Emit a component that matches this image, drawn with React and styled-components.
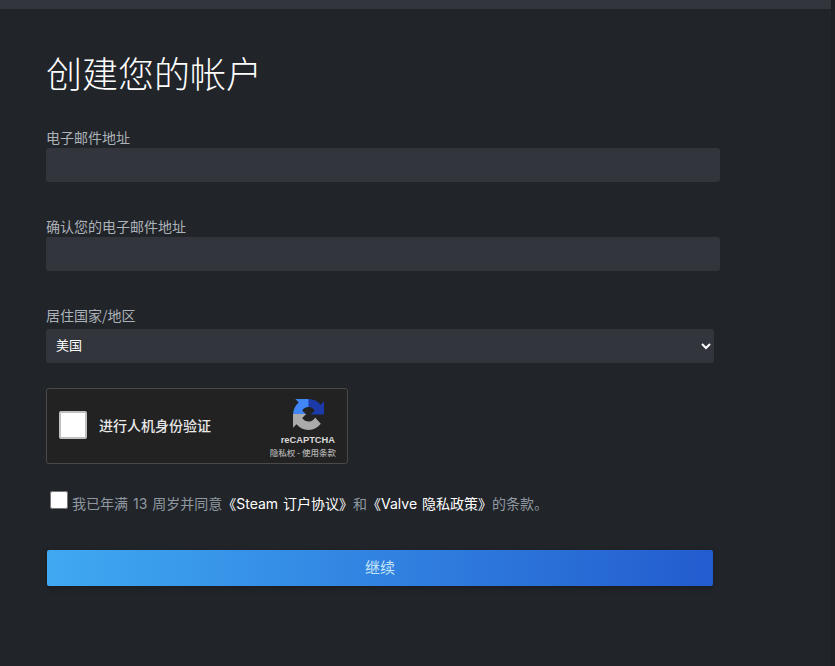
import React from 'react';
import styled, { createGlobalStyle } from 'styled-components';

const Global = createGlobalStyle`
  html, body { margin: 0; padding: 0; background: #212429; height: 666px; overflow: hidden; }
  * { box-sizing: border-box; }
  body { font-family: "Liberation Sans", Arial, "Noto Sans CJK SC", sans-serif; }
`;
const Shell = styled.div`display: flex; height: 666px; background: #212429;`;
const Main = styled.div`flex: 1; display: flex; flex-direction: column; min-width: 0;`;
const ScrollEdge = styled.div`width: 4px; background: #1e2025;`;
const TopBar = styled.div`height: 9px; background: #32353c;`;
const Content = styled.main`padding: 0 0 0 46px; display: flex; flex-direction: column;`;
const Title = styled.h1`
  margin: 40px 0 0; height: 46px; font-size: 36px; line-height: 46px; font-weight: 300; color: #fff;
  font-family: "Noto Sans CJK SC", "Noto Sans CJK JP", sans-serif;
`;
const Label = styled.label`
  display: block; font-size: 14px; line-height: 18px; color: #acb2b8; height: 18px;
  margin-top: ${p => p.$top}px;
  font-family: "Noto Sans CJK SC", sans-serif;
`;
const TextInput = styled.input`
  display: block; width: 674px; height: 34px; margin-top: 2px; border: 0; border-radius: 3px; background: #32353c; color: #fff; outline: 0;
`;
const CountrySelect = styled.select`
  display: block; width: 668px; height: 34px; margin-top: 5px; border: 0; border-radius: 3px;
  background: #32353c; color: #fff; font-size: 13px; padding: 0 6px 3px; outline: 0;
  font-family: "Noto Sans CJK SC", sans-serif;
`;
const Captcha = styled.div`
  margin-top: 25px; width: 302px; height: 76px; background: #222; border: 1px solid #4a4a4a; border-radius: 3px;
  display: flex; align-items: center; padding: 0 11px 2px 12px;
`;
const CaptchaBox = styled.div`
  width: 28px; height: 28px; background: #fff; border: 2px solid #c1c1c1; border-radius: 2px; flex: none;
`;
const CaptchaLabel = styled.span`
  margin-left: 12px; flex: 1; font-size: 14px; font-weight: 500; color: #e8e8e8;
  font-family: "Noto Sans CJK SC", sans-serif;
`;
const Brand = styled.div`display: flex; flex-direction: column; align-items: flex-end; width: 66px; margin-top: 7px;`;
const LogoSlot = styled.div`margin-right: 12px; height: 31px; line-height: 0;`;
const BrandName = styled.div`
  font-size: 9.300px; line-height: 11px; font-weight: 700; color: #d8d8d8; margin: 5px 1px 0 0;
`;
const BrandLinks = styled.div`
  font-size: 8.500px; line-height: 11px; font-weight: 500; color: #b0b0b0; white-space: nowrap; margin-top: 1px;
  font-family: "Noto Sans CJK SC", sans-serif;
`;
const Agreement = styled.div`
  margin-top: 27px; display: flex; align-items: flex-start; padding-left: 4px;
  font-size: 14px; color: #8f98a0; height: 24px;
  font-family: "Inter", "Noto Sans CJK SC", sans-serif;
`;
const AgreeBox = styled.input`
  width: 18px; height: 18px; margin: 0 4px 0 0; flex: none;
`;
const AgreeText = styled.span`line-height: 20px; margin-top: 3px; white-space: nowrap; word-spacing: 1px;`;
const DocLink = styled.a`color: #fff; text-decoration: none;`;
const Continue = styled.button`
  margin: 35px 0 0 1px; width: 666px; height: 36px; border: 0; border-radius: 2px; padding: 0 0 3px;
  background: linear-gradient(to right, #3fa9f2 0%, #235ccf 100%); color: #c6e4f8;
  font-size: 15px; font-family: "Noto Sans CJK SC", sans-serif;
  box-shadow: 0 2px 6px rgba(0,0,0,.25);
`;

const RecaptchaLogo = () => (
  <svg width="31" height="31" viewBox="0 0 64 64" aria-hidden="true">
    <path d="M64 31.955l-.033-1.37V4.687l-7.16 7.16C50.948 4.674 42.033.093 32.05.093c-10.4 0-19.622 4.96-25.458 12.64l11.736 11.86a15.55 15.55 0 0 1 4.754-5.334c2.05-1.6 4.952-2.906 8.968-2.906.485 0 .86.057 1.135.163 4.976.393 9.288 3.14 11.828 7.124l-8.307 8.307c10.522-.04 22.4-.066 27.295.003" fill="#1c3aa9" />
    <path d="M31.955 0l-1.37.033H4.687l7.16 7.16C4.674 13.052.093 21.967.093 31.95c0 .01 0 .02 0 .05l27.2-.05-8.3-8.3c2.54-3.98 6.85-6.73 11.83-7.12l.03-.03c.27-.1.65-.16 1.13-.16z" fill="#4285f4" />
    <path d="M0 32.045l.033 1.37v25.898l7.16-7.16c5.86 7.173 14.774 11.754 24.757 11.754 10.4 0 19.622-4.96 25.458-12.64L45.672 38.407a15.55 15.55 0 0 1-4.754 5.334c-2.05 1.6-4.952 2.906-8.968 2.906-.485 0-.86-.057-1.135-.163-4.976-.393-9.288-3.14-11.828-7.124l8.307-8.307c-10.522.04-22.4.066-27.295-.003" fill="#ababab" />
  </svg>
);

export default function App() {
  return (
    <Shell>
      <Global />
      <Main>
        <TopBar />
        <Content>
          <Title>创建您的帐户</Title>
          <Label $top={33}>电子邮件地址</Label>
          <TextInput />
          <Label $top={35}>确认您的电子邮件地址</Label>
          <TextInput />
          <Label $top={35}>居住国家/地区</Label>
          <CountrySelect defaultValue="us"><option value="us">美国</option></CountrySelect>
          <Captcha>
            <CaptchaBox />
            <CaptchaLabel>进行人机身份验证</CaptchaLabel>
            <Brand>
              <LogoSlot><RecaptchaLogo /></LogoSlot>
              <BrandName>reCAPTCHA</BrandName>
              <BrandLinks>隐私权 - 使用条款</BrandLinks>
            </Brand>
          </Captcha>
          <Agreement>
            <AgreeBox type="checkbox" />
            <AgreeText>我已年满 13 周岁并同意<DocLink>《Steam 订户协议》</DocLink>和<DocLink>《Valve 隐私政策》</DocLink>的条款。</AgreeText>
          </Agreement>
          <Continue>继续</Continue>
        </Content>
      </Main>
      <ScrollEdge />
    </Shell>
  );
}
